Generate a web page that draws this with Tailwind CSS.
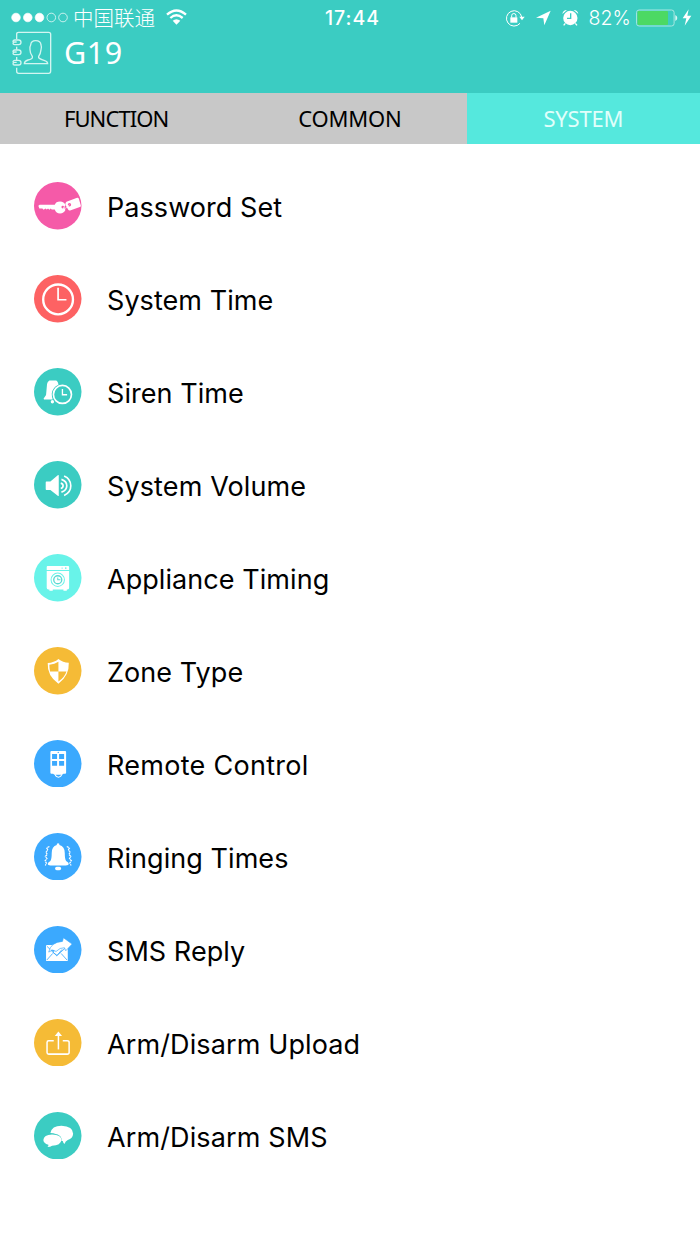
<!DOCTYPE html>
<html lang="en">
<head>
  <meta charset="UTF-8">
  <meta name="viewport" content="width=device-width, initial-scale=1.0">

  <title>G19</title>

  <script src="https://cdn.jsdelivr.net/npm/@tailwindcss/browser@4"></script>
</head>
<body class="bg-white text-black font-['Inter',sans-serif]">

  <header class="h-[93px] bg-[#3bccc2] text-white overflow-hidden">

    <!-- status bar -->
    <div class="h-[30px] pt-[4px] grid grid-cols-[1fr_auto_1fr] items-start">
      <div class="flex items-center h-[27px] pl-[11px]">
        <svg class="w-[58px] h-[12px]" viewBox="0 0 58 12" fill="#fff" stroke="#fff" stroke-width=".7">
          <circle cx="5" cy="5.500" r="4.3"/>
          <circle cx="16.8" cy="5.500" r="4.3"/>
          <circle cx="28.5" cy="5.500" r="4.3"/>
          <circle cx="40.3" cy="5.500" r="4.3" fill="none"/>
          <circle cx="52" cy="5.500" r="4.3" fill="none"/>
        </svg>
        <span class="ml-[4px] text-[20.5px] leading-[27px] font-['Noto_Sans_CJK_SC',sans-serif] font-light">中国联通</span>
        <svg class="ml-[11px] mb-[2px] w-[21px] h-[16px]" viewBox="0 0 63 48" fill="none" stroke="#fff" stroke-width="7">
          <path d="M3 17Q31 -8 60 17"/>
          <path d="M13 27Q31 11 50 27"/>
          <path d="M20 35Q31 26 43 35L31.500 47Z" fill="#fff" stroke="none"/>
        </svg>
      </div>

      <div class="pl-[5px] pt-px text-[19.500px] leading-[27px] font-medium tracking-[1px]">17:44</div>

      <div class="flex items-center justify-end h-[27px] pr-[8px]">
        <svg class="w-[20px] h-[18px]" viewBox="0 0 60 54" fill="none" stroke="#fff" stroke-width="3">
          <path d="M45 43A23 23 0 1 1 50 24"/>
          <path d="M43 23H59L51 34Z" fill="#fff" stroke="none"/>
          <path d="M16 25H37V41H16Z" fill="#fff" stroke="none"/>
          <path d="M20 26V20A6.500 6.500 0 0 1 33 20V26"/>
        </svg>
        <svg class="ml-[11px] w-[15px] h-[16px]" viewBox="0 0 45 48" fill="#fff"><path d="M44 2L25 46L22 25L0 23Z"/></svg>
        <svg class="ml-[11px] w-[17px] h-[17px]" viewBox="0 0 51 51" fill="#fff">
          <circle cx="25" cy="27" r="21.500"/>
          <path d="M1 15Q3 3 15 3Z"/>
          <path d="M35 3Q47 3 49 15Z"/>
          <path d="M10 43L5 49M40 43L45 49" stroke="#fff" stroke-width="4"/>
          <path d="M26 13V28H15" fill="none" stroke="#3bccc2" stroke-width="4"/>
        </svg>
        <span class="ml-[10px] pt-[2px] text-[19.500px] leading-[27px] font-light tracking-[0.100px]">82%</span>
        <svg class="ml-[5px] w-[42px] h-[18px]" viewBox="0 0 42 18">
          <rect x=".6" y="1" width="37.500" height="16" rx="2.500" fill="none" stroke="#a9e8e2" stroke-width="1"/>
          <rect x="1.500" y="2" width="30.500" height="14" rx="1" fill="#4cd964"/>
          <path d="M39.300 6Q41.300 7 41.300 9T39.300 12Z" fill="#d9f6f3"/>
        </svg>
        <svg class="ml-[4px] w-[10px] h-[17px]" viewBox="0 0 30 51" fill="#fff"><path d="M20 1L2 28H13L8 50L28 20H16Z"/></svg>
      </div>
    </div>

    <!-- title -->
    <div class="flex items-start pl-[12px]">
      <svg class="mt-[0.500px] w-[40px] h-[44px]" viewBox="0 0 120 132" fill="none" stroke="#d3f5f1" stroke-width="4">
        <path d="M14 25V9Q14 4 20 4H110Q116 4 116 10V120Q116 127 110 127H20Q14 127 14 121V110M14 47V56M14 78V87"/>
        <path d="M14 33H8Q3 33 3 37T8 41H20Q27 41 27 34T20 27H12M3 33Q3 27 9 27H15"/>
        <path d="M14 63H8Q3 63 3 67T8 71H20Q27 71 27 64T20 57H12M3 63Q3 57 9 57H15"/>
        <path d="M14 94H8Q3 94 3 98T8 102H20Q27 102 27 95T20 88H12M3 94Q3 88 9 88H15"/>
        <path d="M61 76Q54 67 54 56Q52 49 56 42Q57 29 71 29Q86 29 87 42Q90 49 87 56Q86 68 80 76V80Q82 84 96 88Q107 91 107 98H37Q37 91 48 87Q61 83 61 80Z"/>
      </svg>
      <h1 class="ml-[12px] text-[30.500px] leading-[45px] font-normal tracking-[0.500px] font-['Noto_Sans',sans-serif]">G19</h1>
    </div>
  </header>

  <nav class="grid grid-cols-3 h-[51px] bg-[#c8c8c8] text-center text-[22px] leading-[50px] font-['Noto_Sans',sans-serif]">
    <a class="pr-px tracking-[-0.900px]">FUNCTION</a>
    <a class="tracking-[-0.200px]">COMMON</a>
    <a class="bg-[#55e8dd] text-[#e0fffb] tracking-[-0.200px]">SYSTEM</a>
  </nav>

  <ul class="pt-[16px] text-[27px] leading-[40px] tracking-[0.060px]">

    <li class="flex items-center h-[93px] pl-[34px]">
      <svg class="mb-[1px] w-[47.500px] h-[47.500px]" viewBox="0 0 142 142" fill="#fff">
        <circle cx="71" cy="71" r="71" fill="#f55aa8"/>
        <path d="M13 71L17 68H62Q65 58 78 58Q90 58 94 69L90 76L94 84Q89 94 78 94Q66 94 62 82L53 82L50 79L46 83L42 79L38 82L34 79L29 83L25 79H16Z"/>
        <circle cx="86" cy="75" r="4" fill="#f55aa8"/>
        <path d="M97 59L129 47Q133 46 134 50L140 70Q141 74 137 75L108 85Q104 86 102 82L94 69Q93 62 97 59Z"/>
        <circle cx="106" cy="68" r="5" fill="#f55aa8"/>
        <path d="M87 75Q94 82 98 76T106 68" fill="none" stroke="#fff" stroke-width="2"/>
      </svg>
      <span class="ml-[25.500px] pt-[3px]">Password Set</span>
    </li>

    <li class="flex items-center h-[93px] pl-[34px]">
      <svg class="mb-[1px] w-[47.500px] h-[47.500px]" viewBox="0 0 142 142" fill="none" stroke="#fff">
        <circle cx="71" cy="71" r="71" fill="#fd6263" stroke="none"/>
        <circle cx="72" cy="73" r="44.500" stroke-width="7"/>
        <path d="M72 38V74H97" stroke-width="5"/>
      </svg>
      <span class="ml-[25.500px] pt-[3px]">System Time</span>
    </li>

    <li class="flex items-center h-[93px] pl-[34px]">
      <svg class="mb-[1px] w-[47.500px] h-[47.500px]" viewBox="0 0 142 142" fill="#fff">
        <circle cx="71" cy="71" r="71" fill="#3bccc2"/>
        <path d="M46 37H66Q72 39 73 50Q55 58 53 77Q53 85 56 94H30Q27 91 31 88Q38 82 37 70L39 48Q40 40 46 37Z"/>
        <circle cx="55" cy="101" r="5"/>
        <circle cx="85" cy="79" r="27" fill="none" stroke="#fff" stroke-width="5"/>
        <path d="M85 63V80H99" fill="none" stroke="#fff" stroke-width="4"/>
      </svg>
      <span class="ml-[25.500px] pt-[3px]">Siren Time</span>
    </li>

    <li class="flex items-center h-[93px] pl-[34px]">
      <svg class="mb-[1px] w-[47.500px] h-[47.500px]" viewBox="0 0 142 142" fill="#fff">
        <circle cx="71" cy="71" r="71" fill="#3bccc2"/>
        <path d="M37 61H49L72 42Q74 41 74 44V103Q74 106 71 104L49 87H37Q35 87 35 84V64Q35 61 37 61Z"/>
        <path d="M80 66Q87 68 87 74T80 82M82 55Q98 60 98 74T82 93M90 45Q110 54 110 74T90 103" fill="none" stroke="#fff" stroke-width="5"/>
      </svg>
      <span class="ml-[25.500px] pt-[3px] tracking-[0.120px]">System Volume</span>
    </li>

    <li class="flex items-center h-[93px] pl-[34px]">
      <svg class="mb-[1px] w-[47.500px] h-[47.500px]" viewBox="0 0 142 142" fill="#fff">
        <circle cx="71" cy="71" r="71" fill="#68f3e9"/>
        <path d="M41 36H102Q105 36 105 39V48H38V39Q38 36 41 36ZM38 51H105V101Q105 106 100 106H98V110H88V106H56V110H46V106H43Q38 106 38 101Z"/>
        <circle cx="84" cy="42" r="2" fill="#68f3e9"/>
        <circle cx="95" cy="42" r="2.500" fill="#68f3e9"/>
        <circle cx="71" cy="77" r="20" fill="none" stroke="#68f3e9" stroke-width="3"/>
        <circle cx="71" cy="77" r="12" fill="none" stroke="#5ad9d2" stroke-width="4"/>
        <path d="M71 70V77H79" fill="none" stroke="#5ad9d2" stroke-width="3"/>
      </svg>
      <span class="ml-[25.500px] pt-[3px]">Appliance Timing</span>
    </li>

    <li class="flex items-center h-[93px] pl-[34px]">
      <svg class="mb-[1px] w-[47.500px] h-[47.500px]" viewBox="0 0 142 142" fill="#fff">
        <circle cx="71" cy="71" r="71" fill="#f5bb36"/>
        <path d="M73 36Q86 47 104 47Q106 85 73 110Q39 86 41 48Q60 47 73 36Z"/>
        <path d="M73 44V73H48Q46 64 46 53Q62 51 73 44ZM73 73H97Q92 90 73 103Z" fill="#f5bb36"/>
      </svg>
      <span class="ml-[25.500px] pt-[3px]">Zone Type</span>
    </li>

    <li class="flex items-center h-[93px] pl-[34px]">
      <svg class="mb-[2px] w-[47.500px] h-[47.500px]" viewBox="0 0 142 142" fill="#fff">
        <circle cx="71" cy="71" r="71" fill="#3ba9fe"/>
        <path d="M52 33H93Q96 33 96 36V98Q96 101 93 101H88L84 104H61L57 101H52Q49 101 49 98V36Q49 33 52 33Z"/>
        <path d="M54 42H69V57H54ZM75 42H90V57H75ZM54 63H69V77H54ZM75 63H90V77H75Z" fill="#3ba9fe"/>
        <circle cx="72.500" cy="37" r="2" fill="#3ba9fe"/>
        <path d="M63 103Q65 111 73 111T83 103" fill="none" stroke="#fff" stroke-width="3"/>
      </svg>
      <span class="ml-[25.500px] pt-[3px] tracking-[0.280px]">Remote Control</span>
    </li>

    <li class="flex items-center h-[93px] pl-[34px]">
      <svg class="mb-[2px] w-[47.500px] h-[47.500px]" viewBox="0 0 142 142" fill="#fff">
        <circle cx="71" cy="71" r="71" fill="#3ba9fe"/>
        <path d="M68 36Q67 31 72 31T76 36Q92 40 92 60Q92 78 96 84Q104 88 104 93Q104 97 95 97H49Q41 97 41 93Q41 88 49 84Q53 78 53 60Q53 40 68 36Z"/>
        <rect x="63" y="101" width="18" height="10" rx="5"/>
        <path d="M46 40L38 45L42 51L35 57L40 64L34 70L39 77L33 83L37 90L34 97M98 40L106 45L102 51L109 57L104 64L110 70L106 77L112 83L107 90L111 97" fill="none" stroke="#fff" stroke-width="3.500" stroke-dasharray="7 2"/>
      </svg>
      <span class="ml-[25.500px] pt-[3px]">Ringing Times</span>
    </li>

    <li class="flex items-center h-[93px] pl-[34px]">
      <svg class="mb-[2px] w-[47.500px] h-[47.500px]" viewBox="0 0 142 142" fill="#fff">
        <circle cx="71" cy="71" r="71" fill="#3ba9fe"/>
        <path d="M39 57H101V105H36V60Q36 57 39 57Z"/>
        <path d="M39 61L68 89L99 61M38 102L56 82M81 82L99 102" fill="none" stroke="#3ba9fe" stroke-width="2.500"/>
        <path d="M88 35L114 54L95 74L91 65Q78 64 66 76L56 72L44 78Q50 48 85 46Z" stroke="#3ba9fe" stroke-width="2"/>
        <path d="M50 72L60 74L57 79L69 88L84 70" fill="none" stroke="#3ba9fe" stroke-width="2.500"/>
      </svg>
      <span class="ml-[25.500px] pt-[3px]">SMS Reply</span>
    </li>

    <li class="flex items-center h-[93px] pl-[34px]">
      <svg class="mb-[2px] w-[47.500px] h-[47.500px]" viewBox="0 0 142 142" fill="none" stroke="#fff" stroke-width="4.500">
        <circle cx="71" cy="71" r="71" fill="#f5bb36" stroke="none"/>
        <path d="M59 65H44Q39 65 39 70V100Q39 105 44 105H99Q105 105 105 100V70Q105 65 99 65H86"/>
        <path d="M73 91V48"/>
        <path d="M73 37L84 51H62Z" fill="#fff" stroke="none"/>
      </svg>
      <span class="ml-[25.500px] pt-[3px] tracking-[0.120px]">Arm/Disarm Upload</span>
    </li>

    <li class="flex items-center h-[93px] pl-[34px]">
      <svg class="mb-[2px] w-[47.500px] h-[47.500px]" viewBox="0 0 142 142" fill="#fff">
        <circle cx="71" cy="71" r="71" fill="#3bccc2"/>
        <path d="M49 63Q53 41 82 41Q117 42 117 65Q116 79 101 84Q94 87 91 96Q87 93 86 87H82Q86 66 49 63Z"/>
        <path d="M54 67Q82 68 82 84Q80 101 54 101Q49 105 40 105Q44 102 43 98Q28 94 28 84Q29 68 54 67Z"/>
      </svg>
      <span class="ml-[25.500px] pt-[3px] tracking-[0.120px]">Arm/Disarm SMS</span>
    </li>

  </ul>

</body>
</html>
